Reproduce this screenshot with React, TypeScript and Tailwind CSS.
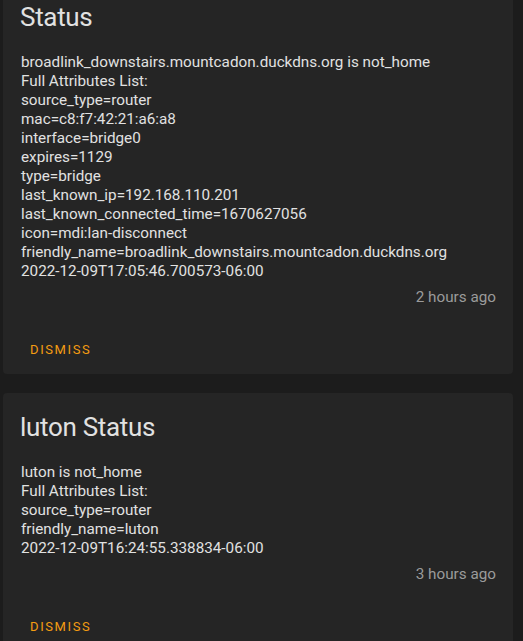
import React from 'react';

type Note = {
  title: string;
  lines: string[];
  ago: string;
};

const notes: Note[] = [
  {
    title: 'Status',
    lines: [
      'broadlink_downstairs.mountcadon.duckdns.org is not_home',
      'Full Attributes List:',
      'source_type=router',
      'mac=c8:f7:42:21:a6:a8',
      'interface=bridge0',
      'expires=1129',
      'type=bridge',
      'last_known_ip=192.168.110.201',
      'last_known_connected_time=1670627056',
      'icon=mdi:lan-disconnect',
      'friendly_name=broadlink_downstairs.mountcadon.duckdns.org',
      '2022-12-09T17:05:46.700573-06:00',
    ],
    ago: '2 hours ago',
  },
  {
    title: 'luton Status',
    lines: [
      'luton is not_home',
      'Full Attributes List:',
      'source_type=router',
      'friendly_name=luton',
      '2022-12-09T16:24:55.338834-06:00',
    ],
    ago: '3 hours ago',
  },
];

const NotificationCard: React.FC<{ note: Note }> = ({ note }) => (
  <div className="rounded-[4px] bg-[#252525]">
    <div className="pl-[17px] pr-4 pt-[18px] text-[26px] leading-[32px] tracking-[-0.012em] text-[#e1e1e1]">
      {note.title}
    </div>
    <div className="mt-[20px] pl-[18px] pr-4 text-[15.25px] leading-[19px] text-[#e1e1e1]">
      {note.lines.map((line, i) => (
        <div key={i}>{line}</div>
      ))}
    </div>
    <div className="mt-[7px] pr-[17px] text-right text-[15.25px] leading-[19px] text-[#9b9b9b]">
      {note.ago}
    </div>
    <div className="mt-[19px] flex h-12 items-center pl-[27px]">
      <button className="text-[13px] uppercase tracking-[1.6px] text-[#f39c12]">
        Dismiss
      </button>
    </div>
  </div>
);

export default function App() {
  return (
    <div
      className="h-[641px] w-[523px] overflow-hidden bg-[#1c1c1c]"
      style={{ fontFamily: 'Roboto, "Noto Sans", sans-serif' }}
    >
      <div className="-mt-[17px] flex flex-col gap-[19px] pl-[3px] pr-[10px]">
        {notes.map((n, i) => (
          <NotificationCard key={i} note={n} />
        ))}
      </div>
    </div>
  );
}
